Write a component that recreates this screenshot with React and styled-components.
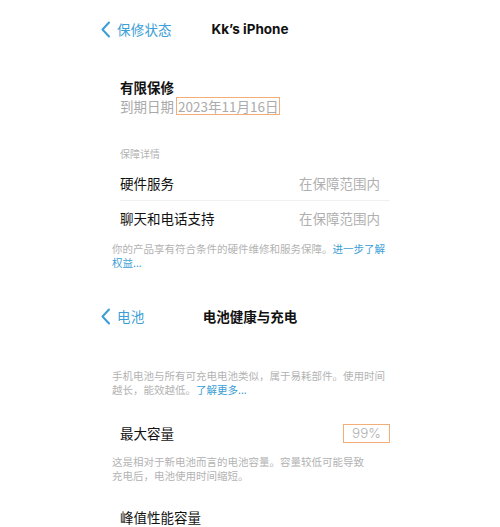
import React from 'react';
import styled, { createGlobalStyle } from 'styled-components';

const GlobalStyle = createGlobalStyle`
  body {
    margin: 0;
    background: #ffffff;
    font-family: "Noto Sans CJK SC", "Noto Sans", sans-serif;
  }
`;

function Chevron() {
  return (
    <svg width="11" height="17" viewBox="0 0 11 17">
      <path d="M9 1.5 L2.5 8.5 L9 15.5" fill="none" stroke="#3b9ed6" strokeWidth="2" strokeLinecap="round" strokeLinejoin="round" />
    </svg>
  );
}

function NavBar({ back, title, height, top }) {
  return (
    <Nav height={height} top={top}>
      <Back>
        <Chevron />
        <span>{back}</span>
      </Back>
      <Title>{title}</Title>
      <span />
    </Nav>
  );
}

export default function App() {
  return (
    <>
      <GlobalStyle />
      <Page>
        <NavBar back="保修状态" title="Kk’s iPhone" height={60} top={0} />
        <Block top={21}>
          <Heading bold>有限保修</Heading>
          <DateLine>
            到期日期<Boxed>2023年11月16日</Boxed>
          </DateLine>
        </Block>
        <Block top={32}>
          <Caption>保障详情</Caption>
          <List>
            <Row>
              <Label>硬件服务</Label>
              <Value>在保障范围内</Value>
            </Row>
            <Row>
              <Label>聊天和电话支持</Label>
              <Value>在保障范围内</Value>
            </Row>
          </List>
        </Block>
        <Note top={8}>
          你的产品享有符合条件的硬件维修和服务保障。<Link>进一步了解权益...</Link>
        </Note>

        <NavBar back="电池" title="电池健康与充电" height={40} top={28} />
        <Note top={35}>
          手机电池与所有可充电电池类似，属于易耗部件。使用时间越长，能效越低。<Link>了解更多...</Link>
        </Note>
        <Block top={26}>
          <StatRow>
            <Label>最大容量</Label>
            <Percent>99%</Percent>
          </StatRow>
        </Block>
        <Note top={12}>
          这是相对于新电池而言的电池容量。容量较低可能导致
          <br />
          充电后，电池使用时间缩短。
        </Note>
        <Block top={24}>
          <Heading>峰值性能容量</Heading>
        </Block>
      </Page>
    </>
  );
}

const Page = styled.div`
  box-sizing: border-box;
  width: 500px;
  height: 527px;
  padding-top: 2px;
  overflow: hidden;
  display: flex;
  flex-direction: column;
`;

const Nav = styled.div`
  display: grid;
  grid-template-columns: 1fr auto 1fr;
  align-items: center;
  height: ${p => p.height}px;
  margin-top: ${p => p.top}px;
`;

const Back = styled.div`
  display: flex;
  align-items: center;
  gap: 6px;
  padding-left: 100px;
  color: #3b9ed6;
  font-size: 13.5px;
  letter-spacing: 0.2px;
`;

const Title = styled.div`
  color: #111;
  font-size: 13.5px;
  font-weight: 700;
  font-family: "Inter", "Noto Sans CJK SC", sans-serif;
`;

const Block = styled.div`
  margin-top: ${p => p.top}px;
  padding-left: 120px;
  width: 270px;
`;

const Heading = styled.div`
  font-size: 13.5px;
  font-weight: ${p => (p.bold ? 700 : 400)};
  line-height: 20px;
  color: #111;
`;

const DateLine = styled.div`
  display: flex;
  align-items: center;
  height: 18px;
  font-size: 13.5px;
  color: #a9a9a9;
`;

const Boxed = styled.span`
  margin-left: 2px;
  padding: 0 1px;
  height: 18px;
  line-height: 16px;
  border: 1px solid #f2ad78;
  box-sizing: border-box;
  color: #ababab;
`;

const Caption = styled.div`
  font-size: 10px;
  line-height: 14px;
  color: #b3b3b3;
`;

const List = styled.div`
  margin-top: 5px;
`;

const Row = styled.div`
  display: flex;
  align-items: center;
  justify-content: space-between;
  height: 34px;
  padding-right: 10px;
  & + & {
    border-top: 1px solid #f0f0f0;
    height: 33px;
  }
`;

const StatRow = styled.div`
  display: flex;
  align-items: center;
  justify-content: space-between;
  height: 20px;
`;

const Label = styled.span`
  font-size: 13.5px;
  color: #111;
`;

const Value = styled.span`
  font-size: 13.5px;
  color: #b0b0b0;
`;

const Percent = styled.span`
  box-sizing: border-box;
  width: 47px;
  height: 19px;
  line-height: 17px;
  text-align: center;
  border: 1px solid #f2ad78;
  font-size: 13.5px;
  color: #b0b0b0;
  font-family: "Inter", sans-serif;
  font-weight: 300;
`;

const Note = styled.p`
  margin: ${p => p.top}px 0 0 112px;
  width: 278px;
  font-size: 10.5px;
  line-height: 14px;
  color: #b3b3b3;
`;

const Link = styled.span`
  color: #3b9ed6;
`;
